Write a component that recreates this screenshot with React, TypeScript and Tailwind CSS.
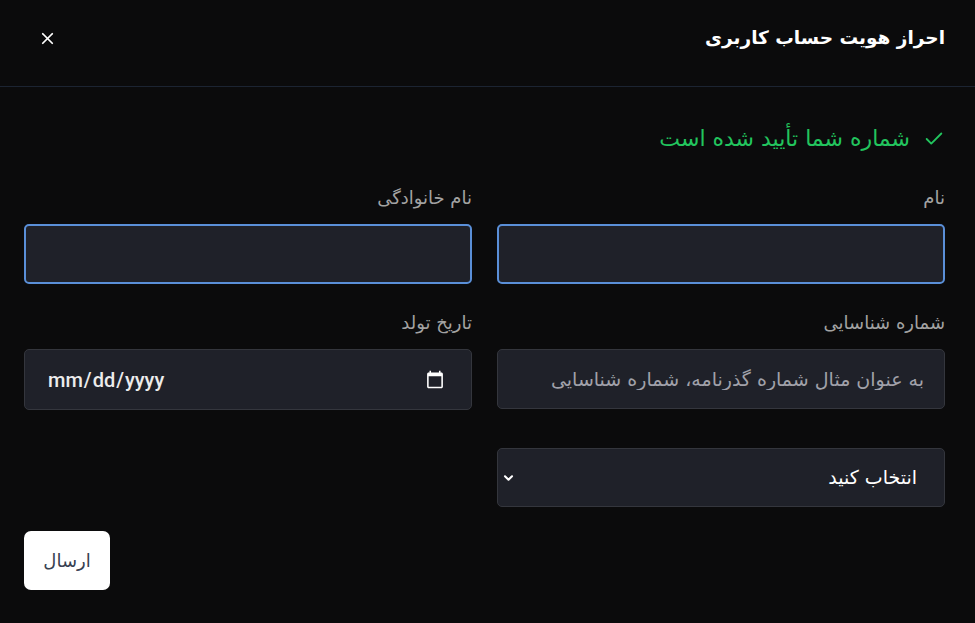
import { Check, X } from "lucide-react";

const FONT = "font-['DejaVu_Sans',sans-serif]";

function Label({ children }: { children: React.ReactNode }) {
  return (
    <label className="mb-[14px] block text-[18px] leading-6 text-[#a3a3a3]">
      {children}
    </label>
  );
}

function TextField({ focus = false, placeholder }: { focus?: boolean; placeholder?: string }) {
  return (
    <input
      type="text"
      placeholder={placeholder}
      className={`h-[60px] w-full rounded-[5px] bg-[#1f2129] px-5 text-[19px] text-white outline-none placeholder:text-[#a1a1aa] ${
        focus ? "border-2 border-[#5a8fd8]" : "border border-[#34363d]"
      }`}
    />
  );
}

export default function App() {
  return (
    <div dir="rtl" className={`min-h-[623px] bg-[#0b0b0c] ${FONT}`}>
      <header className="flex h-[87px] items-start justify-between border-b border-[#1c2432] pt-[24px] pr-[30px] pl-[38px]">
        <h1 className="text-[18.5px] leading-[28px] font-bold text-white">احراز هویت حساب کاربری</h1>
        <button className="mt-[5px] text-white">
          <X className="h-[19px] w-[19px]" strokeWidth={2.2} />
        </button>
      </header>

      <main className="pt-[36px] pr-[30px] pl-6">
        <div className="flex items-center gap-[13px] text-[22px] leading-8 text-[#22c55e]">
          <Check className="h-[22px] w-[22px]" strokeWidth={2} />
          <span>شماره شما تأیید شده است</span>
        </div>

        <div className="mt-[31px] grid grid-cols-2 gap-x-[25px]">
          <div>
            <Label>نام</Label>
            <TextField focus />
          </div>
          <div>
            <Label>نام خانوادگی</Label>
            <TextField focus />
          </div>

          <div className="mt-[27px]">
            <Label>شماره شناسایی</Label>
            <TextField placeholder="به عنوان مثال شماره گذرنامه، شماره شناسایی" />
          </div>
          <div className="mt-[27px]">
            <Label>تاریخ تولد</Label>
            <input
              type="date"
              dir="ltr"
              className="h-[61px] w-full rounded-[5px] border border-[#34363d] bg-[#1f2129] pr-[24px] pl-[22px] font-['Roboto',sans-serif] text-[20px] font-medium text-[#ececec] [color-scheme:dark] outline-none"
            />
          </div>

          <div className="relative mt-[38px]">
            <select className="h-[59px] w-full appearance-none rounded-[5px] border border-[#34363d] bg-[#1f2129] pr-[27px] text-[19px] text-white outline-none">
              <option>انتخاب کنید</option>
            </select>
            <svg
              viewBox="0 0 12 8"
              className="pointer-events-none absolute top-1/2 left-[6px] h-[7px] w-[11px] -translate-y-1/2"
              fill="none"
              stroke="white"
              strokeWidth="2.4"
              strokeLinecap="round"
              strokeLinejoin="round"
            >
              <path d="M2 2l4 4 4-4" />
            </svg>
          </div>
          <div />
        </div>

        <div className="mt-6 flex justify-end">
          <button className="h-[59px] w-[86px] rounded-[7px] bg-white text-[18px] text-[#374151]">
            ارسال
          </button>
        </div>
      </main>
    </div>
  );
}
